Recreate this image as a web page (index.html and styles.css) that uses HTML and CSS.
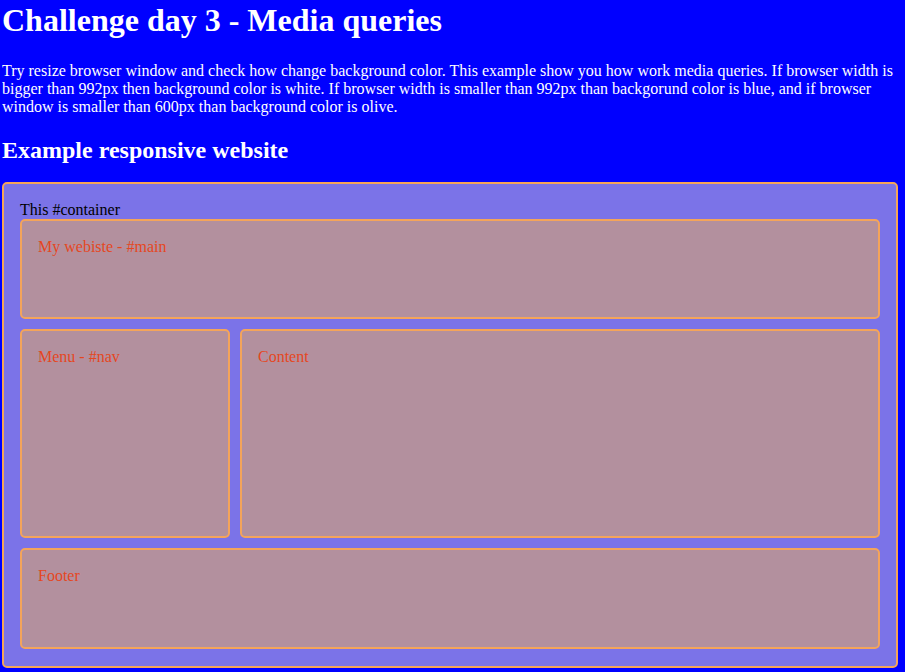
FILE: index.html
```html
<!DOCTYPE html>
<html>
<head>
<meta charset="utf-8">
<title>Challenge day 3 - Media queries</title>
<link rel="stylesheet" href="styles.css">
</head>
<body>
<h1 class="title">Challenge day 3 - Media queries</h1>
<p class="intro">Try resize browser window and check how change background color. This example show you how work media queries. If browser width is bigger than 992px then background color is white. If browser width is smaller than 992px than backgorund color is blue, and if browser window is smaller than 600px than background color is olive.</p>
<h2 class="subtitle">Example responsive website</h2>
<div class="container">
  <div class="container-label">This #container</div>
  <div class="box box-main">My webiste - #main</div>
  <div class="row">
    <div class="box box-nav">Menu - #nav</div>
    <div class="box box-content">Content</div>
  </div>
  <div class="box box-footer">Footer</div>
</div>
</body>
</html>
```

FILE: styles.css
```css
html, body {
  background: #0000ff;
}
body {
  margin: 2px 7px 0 2px;
  font-family: "Liberation Serif", "Times New Roman", serif;
  font-size: 16px;
  color: #ffffff;
}
.title {
  margin: 0 0 23px 0;
  font-size: 32px;
  font-weight: bold;
}
.intro {
  margin: 0 0 21px 0;
}
.subtitle {
  margin: 0 0 18px 0;
  font-size: 24px;
  font-weight: bold;
}
.container {
  background: #7b73e8;
  border: 2px solid #f4a45a;
  border-radius: 5px;
  padding: 16px 16px 17px 16px;
  color: #000000;
  display: flex;
  flex-direction: column;
}
.container-label {
  line-height: 19px;
}
.row {
  display: grid;
  grid-template-columns: 210px 1fr;
  gap: 10px;
  margin: 10px 0;
}
.box {
  box-sizing: border-box;
  background: #b3909e;
  border: 2px solid #f4a45a;
  border-radius: 5px;
  padding: 17px 16px;
  color: #e5471f;
}
.box-main {
  height: 100px;
}
.box-nav, .box-content {
  height: 209px;
}
.box-footer {
  height: 101px;
}
```
